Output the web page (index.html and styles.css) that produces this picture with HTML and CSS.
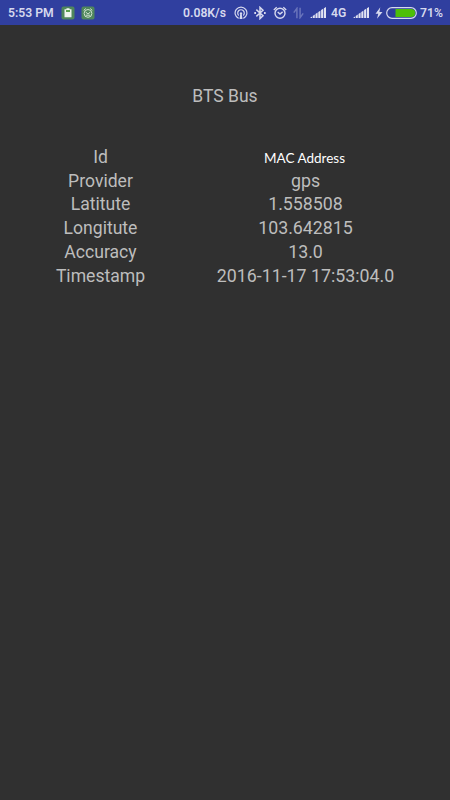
FILE: index.html
```
<!DOCTYPE html>
<html lang="en">

<head>
  <meta charset="UTF-8" />
  <meta name="viewport" content="width=device-width, initial-scale=1.0" />
  <title>BTS Bus</title>
  <link rel="stylesheet" href="styles.css">
</head>

<body>
  <div class="status-bar">
    <div class="status-left">
      <span class="clock">5:53 PM</span>
      <svg class="app-icon" width="14" height="14" viewBox="0 0 14 14">
        <rect x="0.5" y="0.5" width="13" height="13" rx="2" fill="#4f865c" />
        <path d="M3.5 3.3h2v-1h3v1h2v8h-7z" fill="#eef5ee" />
        <rect x="5" y="4" width="4" height="2" fill="#5aa04f" />
      </svg>
      <svg class="app-icon" width="14" height="14" viewBox="0 0 14 14">
        <rect x="0.5" y="0.5" width="13" height="13" rx="2" fill="#4f865c" />
        <circle cx="7" cy="7.4" r="3.9" fill="#4f865c" stroke="#cfe2cf" stroke-width="1" />
        <path d="M2.7 4.4l2-1.9M11.3 4.4l-2-1.9M4.6 6L7 8l2.4-2M4.8 9.2h4.4" fill="none" stroke="#cfe2cf" stroke-width="1" />
      </svg>
    </div>

    <div class="status-right">
      <span class="speed">0.08K/s</span>
      <svg class="hotspot" width="14" height="14" viewBox="0 0 14 14">
        <g fill="none" stroke="#d6d9ee" stroke-width="1.2">
          <path d="M4.6 12.4a5.9 5.9 0 1 1 4.8 0" />
          <path d="M4.8 9.5a3.3 3.3 0 1 1 4.4 0" />
        </g>
        <path d="M7 6.3a1.2 1.2 0 0 1 .8 2.1l.7 4.6h-3l.7-4.6A1.2 1.2 0 0 1 7 6.3z" fill="#d6d9ee" />
      </svg>
      <svg class="bluetooth" width="12" height="14" viewBox="0 0 12 14">
        <path d="M2.3 3.6l6.7 6.1-3 2.9V1.4l3 2.9-6.7 6.1" fill="none" stroke="#d6d9ee" stroke-width="1.5" />
        <path d="M.3 6.1H2v1.8H.3zM10 6.1h1.7v1.8H10z" fill="#d6d9ee" />
      </svg>
      <svg class="alarm" width="14" height="14" viewBox="0 0 14 14">
        <circle cx="7" cy="7.3" r="5" fill="none" stroke="#d6d9ee" stroke-width="1.4" />
        <path d="M.8 3.9l2.9-2.6M13.2 3.9l-2.9-2.6M4.7 6L7 8l2.6-2.1" fill="none" stroke="#d6d9ee" stroke-width="1.4" />
      </svg>
      <svg class="data" width="11" height="12" viewBox="0 0 11 12">
        <path d="M3.9 11.3V1.4L.8 5.6M7.1.7v9.9l3.1-4.2" fill="none" stroke="#6974bb" stroke-width="1.5" />
      </svg>
      <svg class="signal" width="16" height="11" viewBox="0 0 16 11">
        <path d="M0 11l2-1.4V11zM2.7 9.1l2.1-1.5V11H2.7zM5.5 7.1l2.1-1.5V11H5.5zM8.3 5.1l2.1-1.4V11H8.3zM11.1 3.1l2.1-1.4V11h-2.1zM13.9 1.2L16 0v11h-2.1z" fill="#e1e3f2" />
      </svg>
      <span class="network">4G</span>
      <svg class="signal" width="16" height="11" viewBox="0 0 16 11">
        <path d="M0 11l2-1.4V11zM2.7 9.1l2.1-1.5V11H2.7zM5.5 7.1l2.1-1.5V11H5.5zM8.3 5.1l2.1-1.4V11H8.3zM11.1 3.1l2.1-1.4V11h-2.1zM13.9 1.2L16 0v11h-2.1z" fill="#e1e3f2" />
      </svg>
      <svg class="bolt" width="8" height="12" viewBox="0 0 8 12">
        <path d="M5.3.3L.5 6.7h2.8L2 11.7 7.5 5H4.4z" fill="#d6d9ee" />
      </svg>
      <svg class="battery" width="31" height="12" viewBox="0 0 31 12">
        <rect x="0.7" y="0.7" width="29.6" height="10.6" rx="5.3" fill="#2d3c9b" stroke="#d6d9ee" stroke-width="1.2" />
        <path d="M9.5 2h15.7a4 4 0 0 1 0 8H9.5z" fill="#4dbe08" />
      </svg>
      <span class="percent">71%</span>
    </div>
  </div>

  <div class="title">BTS Bus</div>

  <div class="info">
    <div class="label">Id</div>
    <div class="value mac">MAC Address</div>
    <div class="label">Provider</div>
    <div class="value">gps</div>
    <div class="label">Latitute</div>
    <div class="value">1.558508</div>
    <div class="label">Longitute</div>
    <div class="value">103.642815</div>
    <div class="label">Accuracy</div>
    <div class="value">13.0</div>
    <div class="label">Timestamp</div>
    <div class="value">2016-11-17 17:53:04.0</div>
  </div>
</body>

</html>
```

FILE: styles.css
```
body {
  margin: 0;
  padding: 0;
  min-height: 800px;
  font-family: Roboto, sans-serif;
  background-color: #303030;
  color: #bdbdbd;
}

.status-bar {
  display: flex;
  justify-content: space-between;
  align-items: center;
  height: 25px;
  padding: 0 8px;
  background-color: #303f9f;
  color: #d6d9ee;
  font-size: 12.2px;
  font-weight: 600;
  line-height: 25px;
}

.status-left,
.status-right {
  display: flex;
  align-items: center;
}

.status-bar span {
  padding-top: 1px;
  white-space: nowrap;
}

.clock {
  width: 46px;
}

.app-icon {
  margin-left: 6px;
}

.clock + .app-icon {
  margin-left: 7px;
}

.speed {
  width: 45px;
}

.hotspot {
  margin-left: 6px;
}

.bluetooth {
  margin-left: 6px;
}

.alarm {
  margin-left: 7px;
}

.data {
  margin-left: 6px;
}

.signal {
  margin-left: 6px;
}

.network {
  width: 16px;
  margin-left: 5px;
}

.bolt {
  margin-left: 6px;
}

.battery {
  margin-left: 3px;
}

.percent {
  width: 22px;
  margin-left: 3px;
}

.title {
  padding-top: 59px;
  font-size: 17.5px;
  line-height: 24px;
  text-align: center;
}

.info {
  display: grid;
  grid-template-columns: 121px 209px;
  column-gap: 40px;
  grid-auto-rows: 23.72px;
  padding: 37px 40px 0;
  font-size: 17.8px;
  line-height: 24px;
  text-align: center;
}

.label {
  font-size: 17.6px;
}

.mac {
  padding-top: 1px;
  padding-right: 2px;
  font-family: Lato, sans-serif;
  font-size: 13.5px;
  color: #fff;
}
```
